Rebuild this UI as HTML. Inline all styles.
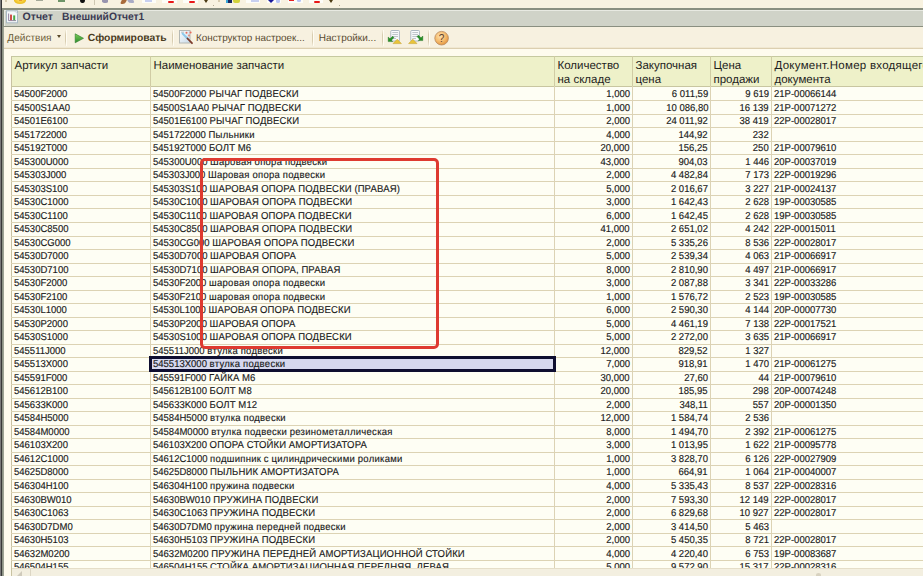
<!DOCTYPE html><html><head><meta charset="utf-8"><style>
*{margin:0;padding:0;box-sizing:border-box}
html,body{width:923px;height:576px;overflow:hidden;background:#F8F2E0;font-family:"Liberation Sans",sans-serif;position:relative}
.a{position:absolute}
.t{position:absolute;white-space:pre;text-rendering:geometricPrecision;color:#1a1a1a;line-height:1}
.d{font-size:10.0px;-webkit-text-stroke:0.15px #1a1a1a}
.h{font-size:11.5px;color:#1e1e1e}
.r{text-align:right}
.dl{transform:scaleX(0.951);transform-origin:0 0}
.dr{transform:scaleX(0.951);transform-origin:100% 0}
.lo{letter-spacing:0.292px}
.up{letter-spacing:0.158px}
</style></head><body><div class="a" style="left:0;top:0;width:1px;height:576px;background:#7a7a7a"></div>
<div class="a" style="left:1px;top:0;width:1px;height:576px;background:#383838"></div>
<div class="a" style="left:2px;top:8px;width:1px;height:568px;background:#8C9284"></div>
<div class="a" style="left:5px;top:0px;width:2px;height:2px;background:#D8CCB0;"></div>
<div class="a" style="left:14px;top:-4px;width:12px;height:7.5px;background:radial-gradient(ellipse at 50% 30%,#FFE680 0%,#F2C62A 60%,#D9A81A 100%);border-radius:50%"></div>
<div class="a" style="left:19px;top:0px;width:2.5px;height:1px;background:#E89A30;"></div>
<div class="a" style="left:36px;top:0px;width:7px;height:1.4px;background:#A4A898;"></div>
<div class="a" style="left:58px;top:0px;width:7px;height:1.8px;background:#6E9468;"></div>
<div class="a" style="left:80px;top:-3px;width:4.5px;height:6.2px;background:#101010;border-radius:50%"></div>
<div class="a" style="left:94px;top:0px;width:1px;height:5px;background:#CFC8B2;"></div>
<div class="a" style="left:102px;top:0px;width:6px;height:3px;background:#9894AE;border-radius:0 0 40% 60%"></div>
<div class="a" style="left:121px;top:0px;width:4.5px;height:3.5px;background:#A86A3A;border-radius:0 0 50% 50%;transform:skewX(-25deg)"></div>
<div class="a" style="left:128px;top:0px;width:6px;height:3px;background:#A8AAC4;border-radius:0 0 50% 50%;transform:skewX(25deg)"></div>
<div class="a" style="left:142px;top:0px;width:14px;height:3px;background:#FDFDF8;"></div>
<div class="a" style="left:145px;top:0px;width:7px;height:1.5px;background:#C8D0F0;"></div>
<div class="a" style="left:162px;top:0px;width:15px;height:3.4px;background:#FDFDF8;"></div>
<div class="a" style="left:168px;top:0.8px;width:6px;height:2.2px;background:#E81818;border-radius:1px"></div>
<div class="a" style="left:183px;top:0px;width:15px;height:3.4px;background:#FDFDF8;"></div>
<div class="a" style="left:188.5px;top:0.8px;width:6px;height:2.2px;background:#E81818;border-radius:1px"></div>
<div class="a" style="left:203.5px;top:0;width:0;height:0;border-left:2.5px solid transparent;border-right:2.5px solid transparent;border-top:3px solid #4A3A12"></div>
<div class="a" style="left:213px;top:5px;width:1px;height:1px;background:#B0A890;"></div>
<div class="a" style="left:218px;top:0px;width:2px;height:2px;background:#D8CCB0;"></div>
<div class="a" style="left:226px;top:0px;width:2px;height:3px;background:#3AA8D8;"></div>
<div class="a" style="left:228px;top:0px;width:4px;height:3px;background:#1A2860;"></div>
<div class="a" style="left:233px;top:0px;width:7px;height:3.3px;background:#D2D23A;border-radius:0 0 2px 2px"></div>
<div class="a" style="left:246px;top:0px;width:14px;height:3px;background:#FDFDF8;"></div>
<div class="a" style="left:250.5px;top:0px;width:8px;height:1.5px;background:#C8D0F0;"></div>
<div class="a" style="left:267px;top:0px;width:14px;height:3px;background:#FDFDF8;"></div>
<div class="a" style="left:267.5px;top:0;width:0;height:0;border-left:3.2px solid transparent;border-right:3.2px solid transparent;border-top:3.2px solid #1A1A9A"></div>
<div class="a" style="left:276px;top:0px;width:4px;height:2.5px;background:#B8C4F4;border-radius:0 0 50% 50%"></div>
<div class="a" style="left:288px;top:0px;width:14.5px;height:3px;background:#FDFDF8;"></div>
<div class="a" style="left:288.6px;top:0px;width:5.5px;height:1.2px;background:#E82020;"></div>
<div class="a" style="left:297px;top:0px;width:3.5px;height:2.2px;background:#B8C4F4;border-radius:0 0 50% 50%"></div>
<div class="a" style="left:309px;top:0px;width:13.5px;height:3.2px;background:#FDFDF8;"></div>
<div class="a" style="left:314px;top:0.8px;width:5.5px;height:2.2px;background:#E81818;border-radius:1px"></div>
<div class="a" style="left:328.5px;top:0;width:0;height:0;border-left:2.7px solid transparent;border-right:2.7px solid transparent;border-top:3px solid #4A3A12"></div>
<div class="a" style="left:338.5px;top:5px;width:1px;height:1px;background:#B0A890;"></div>
<div class="a" style="left:3px;top:8px;width:920px;height:19px;background:#D0D3C8"></div>
<div class="a" style="left:3px;top:8px;width:920px;height:2px;background:#8A8F80"></div>
<div class="a" style="left:3px;top:26px;width:920px;height:1px;background:#8A8F80"></div>
<div class="a" style="left:3px;top:8px;width:1px;height:19px;background:#8A8F80"></div>
<div class="a" style="left:4px;top:10px;width:919px;height:1px;background:#E8EAE2"></div>
<div class="a" style="left:4px;top:10px;width:1px;height:16px;background:#E8EAE2"></div>
<svg class="a" style="left:5px;top:10px" width="14" height="14" viewBox="0 0 14 14">
<rect x="1.5" y="0.8" width="11" height="12" fill="#F4F8FA" stroke="#A8B8C4" stroke-width="1"/>
<path d="M9.5 0.8 L12.5 3.8" stroke="#C8D4DC" stroke-width="1"/>
<path d="M3.6 3.5 V10.6 H11" stroke="#8A7A9A" stroke-width="0.9" fill="none"/>
<rect x="5" y="4.6" width="2" height="5.6" fill="#D0504A"/>
<rect x="8.2" y="5.4" width="2" height="4.8" fill="#4AAA4A"/>
</svg>
<div class="t" style="left:22.5px;top:12px;font-size:10.6px;font-weight:bold;color:#3A3A52">Отчет</div>
<div class="t" style="left:61.5px;top:12px;font-size:10.6px;font-weight:bold;color:#3A3A52;transform:scaleX(0.973);transform-origin:0 0">ВнешнийОтчет1</div>
<div class="a" style="left:3px;top:27px;width:920px;height:549px;background:#FEFBEE"></div>
<div class="a" style="left:3px;top:27px;width:1px;height:549px;background:#9EA294"></div>
<div class="a" style="left:4px;top:27px;width:919px;height:20px;background:#F7F1E0"></div>
<div class="a" style="left:4px;top:47px;width:919px;height:1px;background:#F0E8D2"></div>
<div class="a" style="left:4px;top:48px;width:919px;height:1px;background:#DCCFB0"></div>
<div class="t" style="left:7.3px;top:34px;font-size:10.1px;color:#6C5C38">Действия</div>
<div class="a" style="left:56.5px;top:35px;width:0;height:0;border-left:2.6px solid transparent;border-right:2.6px solid transparent;border-top:3.6px solid #5A4A2A"></div>
<div class="a" style="left:65px;top:30px;width:1px;height:16px;background:linear-gradient(#F3EDDC,#D8CDB0 30%,#D8CDB0 70%,#F3EDDC);"></div>
<div class="a" style="left:66px;top:30px;width:1px;height:16px;background:#FFFCF2;"></div>
<div class="a" style="left:172px;top:30px;width:1px;height:16px;background:linear-gradient(#F3EDDC,#D8CDB0 30%,#D8CDB0 70%,#F3EDDC);"></div>
<div class="a" style="left:173px;top:30px;width:1px;height:16px;background:#FFFCF2;"></div>
<div class="a" style="left:312px;top:30px;width:1px;height:16px;background:linear-gradient(#F3EDDC,#D8CDB0 30%,#D8CDB0 70%,#F3EDDC);"></div>
<div class="a" style="left:313px;top:30px;width:1px;height:16px;background:#FFFCF2;"></div>
<div class="a" style="left:382px;top:30px;width:1px;height:16px;background:linear-gradient(#F3EDDC,#D8CDB0 30%,#D8CDB0 70%,#F3EDDC);"></div>
<div class="a" style="left:383px;top:30px;width:1px;height:16px;background:#FFFCF2;"></div>
<div class="a" style="left:428px;top:30px;width:1px;height:16px;background:linear-gradient(#F3EDDC,#D8CDB0 30%,#D8CDB0 70%,#F3EDDC);"></div>
<div class="a" style="left:429px;top:30px;width:1px;height:16px;background:#FFFCF2;"></div>
<svg class="a" style="left:74px;top:33px" width="11" height="11" viewBox="0 0 11 11"><defs><linearGradient id="pg" x1="0" y1="0" x2="0" y2="1"><stop offset="0" stop-color="#7CD05A"/><stop offset="1" stop-color="#2A8A2A"/></linearGradient></defs><path d="M1.2 0.8 L9.5 5.3 L1.2 9.8 Z" fill="url(#pg)" stroke="#2E7A2A" stroke-width="0.6"/></svg>
<div class="t" style="left:87.8px;top:33.8px;font-size:10.36px;font-weight:bold;color:#4A3C1E">Сформировать</div>
<svg class="a" style="left:178px;top:29px" width="16" height="16" viewBox="0 0 16 16">
<defs><linearGradient id="cg" x1="0" y1="0" x2="1" y2="1"><stop offset="0" stop-color="#FAFCFE"/><stop offset="1" stop-color="#C8DAE8"/></linearGradient></defs>
<rect x="1.5" y="1.5" width="10.5" height="12.5" fill="url(#cg)" stroke="#B4B8B4" stroke-width="1"/>
<path d="M3 3.2 H6" stroke="#B0B4B0" stroke-width="0.8"/>
<path d="M4.5 4.5 L9.5 9.5" stroke="#8CC8EC" stroke-width="1.8" stroke-linecap="round"/>
<path d="M9.5 9.5 L14 14.2" stroke="#7A3A2A" stroke-width="1.8" stroke-linecap="round"/>
<circle cx="8.5" cy="3.8" r="1" fill="#E86A5A"/><circle cx="12.6" cy="3.6" r="1" fill="#E86A5A"/><circle cx="11" cy="6.5" r="1" fill="#E88A7A"/>
</svg>
<div class="t" style="left:195.9px;top:33.9px;font-size:9.91px;color:#5A4C30">Конструктор настроек...</div>
<div class="t" style="left:318.8px;top:33.9px;font-size:10px;color:#5A4C30">Настройки...</div>
<svg class="a" style="left:387px;top:29px" width="17" height="16" viewBox="0 0 17 16">
<rect x="3.8" y="1.5" width="8.6" height="10.5" fill="#FCFDFE" stroke="#A4B0BC" stroke-width="0.9" rx="0.8"/>
<path d="M5.3 3.6 H11 M5.3 5.6 H11 M5.3 7.6 H11 M5.3 9.6 H9" stroke="#A8B0B8" stroke-width="0.8"/><path d="M1.2 8 V12.6 H5.8 L4.4 11.2 L7 8.6 L5.6 7.2 L3 9.8 Z" fill="#249024" stroke="#186818" stroke-width="0.4"/><path d="M6 14.6 L10.2 10.2 L14.4 14.6 Z" fill="#E8C43A" stroke="#C49C22" stroke-width="0.5"/></svg>
<svg class="a" style="left:407px;top:29px" width="17" height="16" viewBox="0 0 17 16">
<rect x="3.8" y="1.5" width="8.6" height="10.5" fill="#FCFDFE" stroke="#A4B0BC" stroke-width="0.9" rx="0.8"/>
<path d="M5.3 3.6 H11 M5.3 5.6 H11 M5.3 7.6 H11 M5.3 9.6 H9" stroke="#A8B0B8" stroke-width="0.8"/><path d="M15.8 7 V11.6 H11.2 L12.6 10.2 L10 7.6 L11.4 6.2 L14 8.8 Z" fill="#249024" stroke="#186818" stroke-width="0.4"/><path d="M1.6 14.6 L5.8 10.2 L10 14.6 Z" fill="#E8C43A" stroke="#C49C22" stroke-width="0.5"/></svg>
<svg class="a" style="left:433px;top:30px" width="17" height="17" viewBox="0 0 17 17">
<defs><radialGradient id="hg" cx="0.4" cy="0.35" r="0.7"><stop offset="0" stop-color="#FDE2B0"/><stop offset="0.6" stop-color="#F4B868"/><stop offset="1" stop-color="#E0903C"/></radialGradient></defs>
<circle cx="8.6" cy="8.2" r="6.8" fill="url(#hg)" stroke="#B88A60" stroke-width="0.8"/>
<text x="8.6" y="11.9" font-family="Liberation Sans" font-size="10" fill="#5A3A2A" text-anchor="middle">?</text>
</svg>
<div class="a" style="left:11px;top:56px;width:912px;height:512px;background:#FEFEF4;overflow:hidden">
<div class="a" style="left:0;top:0;width:912px;height:30px;background:#EEF1C9"></div>
<div class="a" style="left:0;top:0;width:912px;height:1px;background:#C6C9A0"></div>
<div class="a" style="left:0;top:0;width:1px;height:512px;background:#C8C2A2"></div>
<div class="a" style="left:0;top:30px;width:912px;height:1px;background:#C8C6A0"></div>
<div class="a" style="left:0;top:44.36px;width:912px;height:1px;background:#DCD3B4"></div>
<div class="a" style="left:0;top:57.87px;width:912px;height:1px;background:#DCD3B4"></div>
<div class="a" style="left:0;top:71.39px;width:912px;height:1px;background:#DCD3B4"></div>
<div class="a" style="left:0;top:84.90px;width:912px;height:1px;background:#DCD3B4"></div>
<div class="a" style="left:0;top:98.42px;width:912px;height:1px;background:#DCD3B4"></div>
<div class="a" style="left:0;top:111.94px;width:912px;height:1px;background:#DCD3B4"></div>
<div class="a" style="left:0;top:125.45px;width:912px;height:1px;background:#DCD3B4"></div>
<div class="a" style="left:0;top:138.97px;width:912px;height:1px;background:#DCD3B4"></div>
<div class="a" style="left:0;top:152.48px;width:912px;height:1px;background:#DCD3B4"></div>
<div class="a" style="left:0;top:166.00px;width:912px;height:1px;background:#DCD3B4"></div>
<div class="a" style="left:0;top:179.52px;width:912px;height:1px;background:#DCD3B4"></div>
<div class="a" style="left:0;top:193.03px;width:912px;height:1px;background:#DCD3B4"></div>
<div class="a" style="left:0;top:206.55px;width:912px;height:1px;background:#DCD3B4"></div>
<div class="a" style="left:0;top:220.06px;width:912px;height:1px;background:#DCD3B4"></div>
<div class="a" style="left:0;top:233.58px;width:912px;height:1px;background:#DCD3B4"></div>
<div class="a" style="left:0;top:247.10px;width:912px;height:1px;background:#DCD3B4"></div>
<div class="a" style="left:0;top:260.61px;width:912px;height:1px;background:#DCD3B4"></div>
<div class="a" style="left:0;top:274.13px;width:912px;height:1px;background:#DCD3B4"></div>
<div class="a" style="left:0;top:287.64px;width:912px;height:1px;background:#DCD3B4"></div>
<div class="a" style="left:0;top:301.16px;width:912px;height:1px;background:#DCD3B4"></div>
<div class="a" style="left:0;top:314.68px;width:912px;height:1px;background:#DCD3B4"></div>
<div class="a" style="left:0;top:328.19px;width:912px;height:1px;background:#DCD3B4"></div>
<div class="a" style="left:0;top:341.71px;width:912px;height:1px;background:#DCD3B4"></div>
<div class="a" style="left:0;top:355.22px;width:912px;height:1px;background:#DCD3B4"></div>
<div class="a" style="left:0;top:368.74px;width:912px;height:1px;background:#DCD3B4"></div>
<div class="a" style="left:0;top:382.26px;width:912px;height:1px;background:#DCD3B4"></div>
<div class="a" style="left:0;top:395.77px;width:912px;height:1px;background:#DCD3B4"></div>
<div class="a" style="left:0;top:409.29px;width:912px;height:1px;background:#DCD3B4"></div>
<div class="a" style="left:0;top:422.80px;width:912px;height:1px;background:#DCD3B4"></div>
<div class="a" style="left:0;top:436.32px;width:912px;height:1px;background:#DCD3B4"></div>
<div class="a" style="left:0;top:449.84px;width:912px;height:1px;background:#DCD3B4"></div>
<div class="a" style="left:0;top:463.35px;width:912px;height:1px;background:#DCD3B4"></div>
<div class="a" style="left:0;top:476.87px;width:912px;height:1px;background:#DCD3B4"></div>
<div class="a" style="left:0;top:490.38px;width:912px;height:1px;background:#DCD3B4"></div>
<div class="a" style="left:0;top:503.90px;width:912px;height:1px;background:#DCD3B4"></div>
<div class="a" style="left:0;top:517.42px;width:912px;height:1px;background:#DCD3B4"></div>
<div class="a" style="left:139px;top:0;width:1px;height:30px;background:#D0CCA4"></div>
<div class="a" style="left:139px;top:30px;width:1px;height:482px;background:#DCD3B4"></div>
<div class="a" style="left:543px;top:0;width:1px;height:30px;background:#D0CCA4"></div>
<div class="a" style="left:543px;top:30px;width:1px;height:482px;background:#DCD3B4"></div>
<div class="a" style="left:621px;top:0;width:1px;height:30px;background:#D0CCA4"></div>
<div class="a" style="left:621px;top:30px;width:1px;height:482px;background:#DCD3B4"></div>
<div class="a" style="left:699px;top:0;width:1px;height:30px;background:#D0CCA4"></div>
<div class="a" style="left:699px;top:30px;width:1px;height:482px;background:#DCD3B4"></div>
<div class="a" style="left:760px;top:0;width:1px;height:30px;background:#D0CCA4"></div>
<div class="a" style="left:760px;top:30px;width:1px;height:482px;background:#DCD3B4"></div>
<div class="a" style="left:138px;top:300px;width:407px;height:16px;background:#D6D8EE;border:3px solid #0E0E30"></div>
<div class="t h" style="left:3.5px;top:4.799999999999997px">Артикул запчасти</div>
<div class="t h" style="left:142.5px;top:4.799999999999997px">Наименование запчасти</div>
<div class="t h" style="left:546.5px;top:4.799999999999997px">Количество</div>
<div class="t h" style="left:546.5px;top:18.799999999999997px">на складе</div>
<div class="t h" style="left:624.5px;top:4.799999999999997px">Закупочная</div>
<div class="t h" style="left:624.5px;top:18.799999999999997px">цена</div>
<div class="t h" style="left:702.5px;top:4.799999999999997px">Цена</div>
<div class="t h" style="left:702.5px;top:18.799999999999997px">продажи</div>
<div class="t h" style="left:763.5px;top:4.799999999999997px"><span style="letter-spacing:0.26px">Документ.Номер входящего</span></div>
<div class="t h" style="left:763.5px;top:18.799999999999997px">документа</div>
<div class="t d dl" style="left:3px;top:34.04px">54500F2000</div>
<div class="t d dl" style="left:142px;top:34.04px">54500F2000 <span class="up">РЫЧАГ</span> <span class="up">ПОДВЕСКИ</span></div>
<div class="t d dr" style="right:293px;top:34.04px">1,000</div>
<div class="t d dr" style="right:215px;top:34.04px">6 011,59</div>
<div class="t d dr" style="right:154px;top:34.04px">9 619</div>
<div class="t d dl" style="left:763px;top:34.04px">21P-00066144</div>
<div class="t d dl" style="left:3px;top:47.56px">54500S1AA0</div>
<div class="t d dl" style="left:142px;top:47.56px">54500S1AA0 <span class="up">РЫЧАГ</span> <span class="up">ПОДВЕСКИ</span></div>
<div class="t d dr" style="right:293px;top:47.56px">1,000</div>
<div class="t d dr" style="right:215px;top:47.56px">10 086,80</div>
<div class="t d dr" style="right:154px;top:47.56px">16 139</div>
<div class="t d dl" style="left:763px;top:47.56px">21P-00071272</div>
<div class="t d dl" style="left:3px;top:61.07px">54501E6100</div>
<div class="t d dl" style="left:142px;top:61.07px">54501E6100 <span class="up">РЫЧАГ</span> <span class="up">ПОДВЕСКИ</span></div>
<div class="t d dr" style="right:293px;top:61.07px">2,000</div>
<div class="t d dr" style="right:215px;top:61.07px">24 011,92</div>
<div class="t d dr" style="right:154px;top:61.07px">38 419</div>
<div class="t d dl" style="left:763px;top:61.07px">22P-00028017</div>
<div class="t d dl" style="left:3px;top:74.59px">5451722000</div>
<div class="t d dl" style="left:142px;top:74.59px">5451722000 <span class="up">П</span><span class="lo">ыльники</span></div>
<div class="t d dr" style="right:293px;top:74.59px">4,000</div>
<div class="t d dr" style="right:215px;top:74.59px">144,92</div>
<div class="t d dr" style="right:154px;top:74.59px">232</div>
<div class="t d dl" style="left:763px;top:74.59px"></div>
<div class="t d dl" style="left:3px;top:88.10px">545192T000</div>
<div class="t d dl" style="left:142px;top:88.10px">545192T000 <span class="up">БОЛТ</span> <span class="up">М</span>6</div>
<div class="t d dr" style="right:293px;top:88.10px">20,000</div>
<div class="t d dr" style="right:215px;top:88.10px">156,25</div>
<div class="t d dr" style="right:154px;top:88.10px">250</div>
<div class="t d dl" style="left:763px;top:88.10px">21P-00079610</div>
<div class="t d dl" style="left:3px;top:101.62px">545300U000</div>
<div class="t d dl" style="left:142px;top:101.62px">545300U000 <span class="up">Ш</span><span class="lo">аровая</span> <span class="lo">опора</span> <span class="lo">подвески</span></div>
<div class="t d dr" style="right:293px;top:101.62px">43,000</div>
<div class="t d dr" style="right:215px;top:101.62px">904,03</div>
<div class="t d dr" style="right:154px;top:101.62px">1 446</div>
<div class="t d dl" style="left:763px;top:101.62px">20P-00037019</div>
<div class="t d dl" style="left:3px;top:115.14px">545303J000</div>
<div class="t d dl" style="left:142px;top:115.14px">545303J000 <span class="up">Ш</span><span class="lo">аровая</span> <span class="lo">опора</span> <span class="lo">подвески</span></div>
<div class="t d dr" style="right:293px;top:115.14px">2,000</div>
<div class="t d dr" style="right:215px;top:115.14px">4 482,84</div>
<div class="t d dr" style="right:154px;top:115.14px">7 173</div>
<div class="t d dl" style="left:763px;top:115.14px">22P-00019296</div>
<div class="t d dl" style="left:3px;top:128.65px">545303S100</div>
<div class="t d dl" style="left:142px;top:128.65px">545303S100 <span class="up">ШАРОВАЯ</span> <span class="up">ОПОРА</span> <span class="up">ПОДВЕСКИ</span> (<span class="up">ПРАВАЯ</span>)</div>
<div class="t d dr" style="right:293px;top:128.65px">5,000</div>
<div class="t d dr" style="right:215px;top:128.65px">2 016,67</div>
<div class="t d dr" style="right:154px;top:128.65px">3 227</div>
<div class="t d dl" style="left:763px;top:128.65px">21P-00024137</div>
<div class="t d dl" style="left:3px;top:142.17px">54530C1000</div>
<div class="t d dl" style="left:142px;top:142.17px">54530C1000 <span class="up">ШАРОВАЯ</span> <span class="up">ОПОРА</span> <span class="up">ПОДВЕСКИ</span></div>
<div class="t d dr" style="right:293px;top:142.17px">3,000</div>
<div class="t d dr" style="right:215px;top:142.17px">1 642,43</div>
<div class="t d dr" style="right:154px;top:142.17px">2 628</div>
<div class="t d dl" style="left:763px;top:142.17px">19P-00030585</div>
<div class="t d dl" style="left:3px;top:155.68px">54530C1100</div>
<div class="t d dl" style="left:142px;top:155.68px">54530C1100 <span class="up">ШАРОВАЯ</span> <span class="up">ОПОРА</span> <span class="up">ПОДВЕСКИ</span></div>
<div class="t d dr" style="right:293px;top:155.68px">6,000</div>
<div class="t d dr" style="right:215px;top:155.68px">1 642,45</div>
<div class="t d dr" style="right:154px;top:155.68px">2 628</div>
<div class="t d dl" style="left:763px;top:155.68px">19P-00030585</div>
<div class="t d dl" style="left:3px;top:169.20px">54530C8500</div>
<div class="t d dl" style="left:142px;top:169.20px">54530C8500 <span class="up">ШАРОВАЯ</span> <span class="up">ОПОРА</span> <span class="up">ПОДВЕСКИ</span></div>
<div class="t d dr" style="right:293px;top:169.20px">41,000</div>
<div class="t d dr" style="right:215px;top:169.20px">2 651,02</div>
<div class="t d dr" style="right:154px;top:169.20px">4 242</div>
<div class="t d dl" style="left:763px;top:169.20px">22P-00015011</div>
<div class="t d dl" style="left:3px;top:182.72px">54530CG000</div>
<div class="t d dl" style="left:142px;top:182.72px">54530CG000 <span class="up">ШАРОВАЯ</span> <span class="up">ОПОРА</span> <span class="up">ПОДВЕСКИ</span></div>
<div class="t d dr" style="right:293px;top:182.72px">2,000</div>
<div class="t d dr" style="right:215px;top:182.72px">5 335,26</div>
<div class="t d dr" style="right:154px;top:182.72px">8 536</div>
<div class="t d dl" style="left:763px;top:182.72px">22P-00028017</div>
<div class="t d dl" style="left:3px;top:196.23px">54530D7000</div>
<div class="t d dl" style="left:142px;top:196.23px">54530D7000 <span class="up">ШАРОВАЯ</span> <span class="up">ОПОРА</span></div>
<div class="t d dr" style="right:293px;top:196.23px">5,000</div>
<div class="t d dr" style="right:215px;top:196.23px">2 539,34</div>
<div class="t d dr" style="right:154px;top:196.23px">4 063</div>
<div class="t d dl" style="left:763px;top:196.23px">21P-00066917</div>
<div class="t d dl" style="left:3px;top:209.75px">54530D7100</div>
<div class="t d dl" style="left:142px;top:209.75px">54530D7100 <span class="up">ШАРОВАЯ</span> <span class="up">ОПОРА</span>, <span class="up">ПРАВАЯ</span></div>
<div class="t d dr" style="right:293px;top:209.75px">8,000</div>
<div class="t d dr" style="right:215px;top:209.75px">2 810,90</div>
<div class="t d dr" style="right:154px;top:209.75px">4 497</div>
<div class="t d dl" style="left:763px;top:209.75px">21P-00066917</div>
<div class="t d dl" style="left:3px;top:223.26px">54530F2000</div>
<div class="t d dl" style="left:142px;top:223.26px">54530F2000 <span class="lo">шаровая</span> <span class="lo">опора</span> <span class="lo">подвески</span></div>
<div class="t d dr" style="right:293px;top:223.26px">3,000</div>
<div class="t d dr" style="right:215px;top:223.26px">2 087,88</div>
<div class="t d dr" style="right:154px;top:223.26px">3 341</div>
<div class="t d dl" style="left:763px;top:223.26px">22P-00033286</div>
<div class="t d dl" style="left:3px;top:236.78px">54530F2100</div>
<div class="t d dl" style="left:142px;top:236.78px">54530F2100 <span class="lo">шаровая</span> <span class="lo">опора</span> <span class="lo">подвески</span></div>
<div class="t d dr" style="right:293px;top:236.78px">1,000</div>
<div class="t d dr" style="right:215px;top:236.78px">1 576,72</div>
<div class="t d dr" style="right:154px;top:236.78px">2 523</div>
<div class="t d dl" style="left:763px;top:236.78px">19P-00030585</div>
<div class="t d dl" style="left:3px;top:250.30px">54530L1000</div>
<div class="t d dl" style="left:142px;top:250.30px">54530L1000 <span class="up">ШАРОВАЯ</span> <span class="up">ОПОРА</span> <span class="up">ПОДВЕСКИ</span></div>
<div class="t d dr" style="right:293px;top:250.30px">6,000</div>
<div class="t d dr" style="right:215px;top:250.30px">2 590,30</div>
<div class="t d dr" style="right:154px;top:250.30px">4 144</div>
<div class="t d dl" style="left:763px;top:250.30px">20P-00007730</div>
<div class="t d dl" style="left:3px;top:263.81px">54530P2000</div>
<div class="t d dl" style="left:142px;top:263.81px">54530P2000 <span class="up">ШАРОВАЯ</span> <span class="up">ОПОРА</span></div>
<div class="t d dr" style="right:293px;top:263.81px">5,000</div>
<div class="t d dr" style="right:215px;top:263.81px">4 461,19</div>
<div class="t d dr" style="right:154px;top:263.81px">7 138</div>
<div class="t d dl" style="left:763px;top:263.81px">22P-00017521</div>
<div class="t d dl" style="left:3px;top:277.33px">54530S1000</div>
<div class="t d dl" style="left:142px;top:277.33px">54530S1000 <span class="up">ШАРОВАЯ</span> <span class="up">ОПОРА</span> <span class="up">ПОДВЕСКИ</span></div>
<div class="t d dr" style="right:293px;top:277.33px">5,000</div>
<div class="t d dr" style="right:215px;top:277.33px">2 272,00</div>
<div class="t d dr" style="right:154px;top:277.33px">3 635</div>
<div class="t d dl" style="left:763px;top:277.33px">21P-00066917</div>
<div class="t d dl" style="left:3px;top:290.84px">545511J000</div>
<div class="t d dl" style="left:142px;top:290.84px">545511J000 <span class="lo">втулка</span> <span class="lo">подвески</span></div>
<div class="t d dr" style="right:293px;top:290.84px">12,000</div>
<div class="t d dr" style="right:215px;top:290.84px">829,52</div>
<div class="t d dr" style="right:154px;top:290.84px">1 327</div>
<div class="t d dl" style="left:763px;top:290.84px"></div>
<div class="t d dl" style="left:3px;top:304.36px">545513X000</div>
<div class="t d dl" style="left:142px;top:304.36px">545513X000 <span class="lo">втулка</span> <span class="lo">подвески</span></div>
<div class="t d dr" style="right:293px;top:304.36px">7,000</div>
<div class="t d dr" style="right:215px;top:304.36px">918,91</div>
<div class="t d dr" style="right:154px;top:304.36px">1 470</div>
<div class="t d dl" style="left:763px;top:304.36px">21P-00061275</div>
<div class="t d dl" style="left:3px;top:317.88px">545591F000</div>
<div class="t d dl" style="left:142px;top:317.88px">545591F000 <span class="up">ГАЙКА</span> <span class="up">М</span>6</div>
<div class="t d dr" style="right:293px;top:317.88px">30,000</div>
<div class="t d dr" style="right:215px;top:317.88px">27,60</div>
<div class="t d dr" style="right:154px;top:317.88px">44</div>
<div class="t d dl" style="left:763px;top:317.88px">21P-00079610</div>
<div class="t d dl" style="left:3px;top:331.39px">545612B100</div>
<div class="t d dl" style="left:142px;top:331.39px">545612B100 <span class="up">БОЛТ</span> <span class="up">М</span>8</div>
<div class="t d dr" style="right:293px;top:331.39px">20,000</div>
<div class="t d dr" style="right:215px;top:331.39px">185,95</div>
<div class="t d dr" style="right:154px;top:331.39px">298</div>
<div class="t d dl" style="left:763px;top:331.39px">20P-00074248</div>
<div class="t d dl" style="left:3px;top:344.91px">545633K000</div>
<div class="t d dl" style="left:142px;top:344.91px">545633K000 <span class="up">БОЛТ</span> <span class="up">М</span>12</div>
<div class="t d dr" style="right:293px;top:344.91px">2,000</div>
<div class="t d dr" style="right:215px;top:344.91px">348,11</div>
<div class="t d dr" style="right:154px;top:344.91px">557</div>
<div class="t d dl" style="left:763px;top:344.91px">20P-00001350</div>
<div class="t d dl" style="left:3px;top:358.42px">54584H5000</div>
<div class="t d dl" style="left:142px;top:358.42px">54584H5000 <span class="lo">втулка</span> <span class="lo">подвески</span></div>
<div class="t d dr" style="right:293px;top:358.42px">12,000</div>
<div class="t d dr" style="right:215px;top:358.42px">1 584,74</div>
<div class="t d dr" style="right:154px;top:358.42px">2 536</div>
<div class="t d dl" style="left:763px;top:358.42px"></div>
<div class="t d dl" style="left:3px;top:371.94px">54584M0000</div>
<div class="t d dl" style="left:142px;top:371.94px">54584M0000 <span class="lo">втулка</span> <span class="lo">подвески</span> <span class="lo">резинометаллическая</span></div>
<div class="t d dr" style="right:293px;top:371.94px">8,000</div>
<div class="t d dr" style="right:215px;top:371.94px">1 494,70</div>
<div class="t d dr" style="right:154px;top:371.94px">2 392</div>
<div class="t d dl" style="left:763px;top:371.94px">21P-00061275</div>
<div class="t d dl" style="left:3px;top:385.46px">546103X200</div>
<div class="t d dl" style="left:142px;top:385.46px">546103X200 <span class="up">ОПОРА</span> <span class="up">СТОЙКИ</span> <span class="up">АМОРТИЗАТОРА</span></div>
<div class="t d dr" style="right:293px;top:385.46px">3,000</div>
<div class="t d dr" style="right:215px;top:385.46px">1 013,95</div>
<div class="t d dr" style="right:154px;top:385.46px">1 622</div>
<div class="t d dl" style="left:763px;top:385.46px">21P-00095778</div>
<div class="t d dl" style="left:3px;top:398.97px">54612C1000</div>
<div class="t d dl" style="left:142px;top:398.97px">54612C1000 <span class="lo">подшипник</span> <span class="lo">с</span> <span class="lo">цилиндрическими</span> <span class="lo">роликами</span></div>
<div class="t d dr" style="right:293px;top:398.97px">1,000</div>
<div class="t d dr" style="right:215px;top:398.97px">3 828,70</div>
<div class="t d dr" style="right:154px;top:398.97px">6 126</div>
<div class="t d dl" style="left:763px;top:398.97px">22P-00027909</div>
<div class="t d dl" style="left:3px;top:412.49px">54625D8000</div>
<div class="t d dl" style="left:142px;top:412.49px">54625D8000 <span class="up">ПЫЛЬНИК</span> <span class="up">АМОРТИЗАТОРА</span></div>
<div class="t d dr" style="right:293px;top:412.49px">1,000</div>
<div class="t d dr" style="right:215px;top:412.49px">664,91</div>
<div class="t d dr" style="right:154px;top:412.49px">1 064</div>
<div class="t d dl" style="left:763px;top:412.49px">21P-00040007</div>
<div class="t d dl" style="left:3px;top:426.00px">546304H100</div>
<div class="t d dl" style="left:142px;top:426.00px">546304H100 <span class="lo">пружина</span> <span class="lo">подвески</span></div>
<div class="t d dr" style="right:293px;top:426.00px">4,000</div>
<div class="t d dr" style="right:215px;top:426.00px">5 335,43</div>
<div class="t d dr" style="right:154px;top:426.00px">8 537</div>
<div class="t d dl" style="left:763px;top:426.00px">22P-00028316</div>
<div class="t d dl" style="left:3px;top:439.52px">54630BW010</div>
<div class="t d dl" style="left:142px;top:439.52px">54630BW010 <span class="up">ПРУЖИНА</span> <span class="up">ПОДВЕСКИ</span></div>
<div class="t d dr" style="right:293px;top:439.52px">2,000</div>
<div class="t d dr" style="right:215px;top:439.52px">7 593,30</div>
<div class="t d dr" style="right:154px;top:439.52px">12 149</div>
<div class="t d dl" style="left:763px;top:439.52px">22P-00028017</div>
<div class="t d dl" style="left:3px;top:453.04px">54630C1063</div>
<div class="t d dl" style="left:142px;top:453.04px">54630C1063 <span class="up">ПРУЖИНА</span> <span class="up">ПОДВЕСКИ</span></div>
<div class="t d dr" style="right:293px;top:453.04px">2,000</div>
<div class="t d dr" style="right:215px;top:453.04px">6 829,68</div>
<div class="t d dr" style="right:154px;top:453.04px">10 927</div>
<div class="t d dl" style="left:763px;top:453.04px">22P-00028017</div>
<div class="t d dl" style="left:3px;top:466.55px">54630D7DM0</div>
<div class="t d dl" style="left:142px;top:466.55px">54630D7DM0 <span class="lo">пружина</span> <span class="lo">передней</span> <span class="lo">подвески</span></div>
<div class="t d dr" style="right:293px;top:466.55px">2,000</div>
<div class="t d dr" style="right:215px;top:466.55px">3 414,50</div>
<div class="t d dr" style="right:154px;top:466.55px">5 463</div>
<div class="t d dl" style="left:763px;top:466.55px"></div>
<div class="t d dl" style="left:3px;top:480.07px">54630H5103</div>
<div class="t d dl" style="left:142px;top:480.07px">54630H5103 <span class="up">ПРУЖИНА</span> <span class="up">ПОДВЕСКИ</span></div>
<div class="t d dr" style="right:293px;top:480.07px">2,000</div>
<div class="t d dr" style="right:215px;top:480.07px">5 450,35</div>
<div class="t d dr" style="right:154px;top:480.07px">8 721</div>
<div class="t d dl" style="left:763px;top:480.07px">22P-00028017</div>
<div class="t d dl" style="left:3px;top:493.58px">54632M0200</div>
<div class="t d dl" style="left:142px;top:493.58px">54632M0200 <span class="up">ПРУЖИНА</span> <span class="up">ПЕРЕДНЕЙ</span> <span class="up">АМОРТИЗАЦИОННОЙ</span> <span class="up">СТОЙКИ</span></div>
<div class="t d dr" style="right:293px;top:493.58px">4,000</div>
<div class="t d dr" style="right:215px;top:493.58px">4 220,40</div>
<div class="t d dr" style="right:154px;top:493.58px">6 753</div>
<div class="t d dl" style="left:763px;top:493.58px">19P-00083687</div>
<div class="t d dl" style="left:3px;top:507.10px">546504H155</div>
<div class="t d dl" style="left:142px;top:507.10px">546504H155 <span class="up">СТОЙКА</span> <span class="up">АМОРТИЗАЦИОННАЯ</span> <span class="up">ПЕРЕДНЯЯ</span>, <span class="up">ЛЕВАЯ</span></div>
<div class="t d dr" style="right:293px;top:507.10px">5,000</div>
<div class="t d dr" style="right:215px;top:507.10px">9 572,90</div>
<div class="t d dr" style="right:154px;top:507.10px">15 317</div>
<div class="t d dl" style="left:763px;top:507.10px">22P-00028316</div>
</div>
<div class="a" style="left:11px;top:568px;width:912px;height:8px;background:#F3EFE0;border-top:1px solid #E5DEC8"></div>
<div class="a" style="left:11px;top:568px;width:1px;height:8px;background:#C8C2A2"></div>
<div class="a" style="left:30px;top:569px;width:1px;height:7px;background:#DCD6C4;"></div>
<div class="a" style="left:17px;top:571px;width:0;height:0;border-top:5px solid transparent;border-bottom:5px solid transparent;border-right:5px solid #CFCABB"></div>
<div class="a" style="left:816px;top:573px;width:5px;height:3px;background:#D8D2C0;border-radius:50% 50% 0 0"></div>
<div class="a" style="left:200px;top:158px;width:239px;height:191px;border:3px solid #DE3A30;border-radius:5px"></div></body></html>
